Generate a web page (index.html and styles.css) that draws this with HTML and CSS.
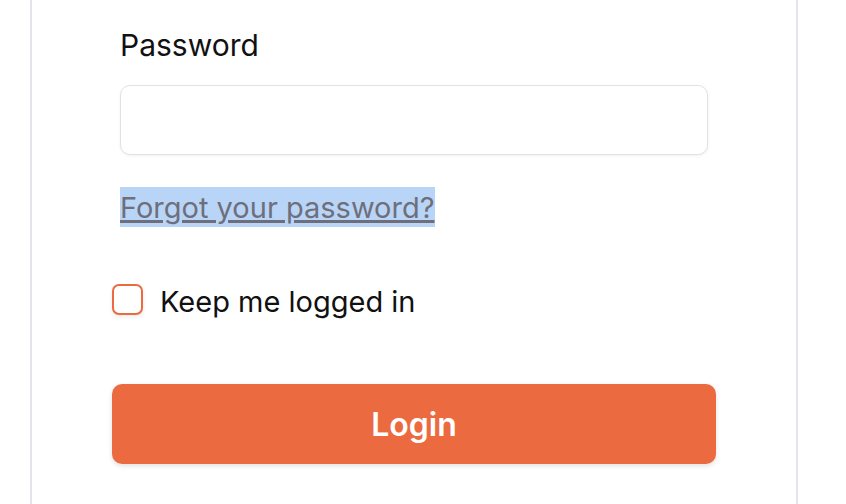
FILE: index.html
```html
<!DOCTYPE html>
<html>
<head>
<meta charset="utf-8">
<link rel="stylesheet" href="styles.css">
</head>
<body>
<div class="card">
  <form class="form">
    <div class="field">
      <label class="label" for="pw">Password</label>
      <input class="input" id="pw" type="password">
    </div>
    <div class="forgot-row"><a class="forgot" href="#">Forgot your password?</a></div>
    <label class="remember">
      <span class="checkbox"></span>
      <span class="remember-text">Keep me logged in</span>
    </label>
    <button class="login" type="button">Login</button>
  </form>
</div>
</body>
</html>
```
FILE: styles.css
```css
html, body {
  margin: 0;
  padding: 0;
  background: #ffffff;
  height: 100%;
  overflow: hidden;
}
body {
  font-family: Inter, "Liberation Sans", sans-serif;
  color: #111111;
}
.card {
  margin-left: 30px;
  width: 764px;
  height: 100%;
  border-left: 2px solid #e4e4ec;
  border-right: 2px solid #e4e4ec;
  box-sizing: content-box;
}
.form {
  display: flex;
  flex-direction: column;
  padding: 25px 80px 0;
}
.field {
  display: flex;
  flex-direction: column;
  margin: 0 8px;
}
.label {
  font-size: 30px;
  line-height: 40px;
  font-weight: 400;
  color: #111;
}
.input {
  margin-top: 20px;
  height: 70px;
  box-sizing: border-box;
  border: 1.5px solid #e2e2e2;
  border-radius: 10px;
  box-shadow: 0 1px 3px rgba(0,0,0,0.06);
  background: #fff;
  outline: none;
}
.forgot-row {
  margin: 32px 8px 0;
  height: 40px;
  display: flex;
}
.forgot {
  display: inline-block;
  box-sizing: border-box;
  height: 40px;
  padding-top: 2px;
  line-height: 38px;
  font-size: 29px;
  color: #6f6f7b;
  background: #b8d5f8;
  text-decoration: underline;
  text-decoration-thickness: 3px;
  text-underline-offset: 2px;
}
.remember {
  display: flex;
  align-items: center;
  margin-top: 57px;
  height: 31px;
}
.checkbox {
  width: 31px;
  height: 31px;
  flex-shrink: 0;
  box-sizing: border-box;
  border: 2px solid #ec6a40;
  border-radius: 7px;
  background: #fff;
  box-shadow: 0 2px 4px rgba(0,0,0,0.08);
}
.remember-text {
  margin-left: 17px;
  padding-top: 4px;
  font-size: 29px;
  color: #111;
}
.login {
  margin-top: 69px;
  height: 80px;
  border: none;
  border-radius: 10px;
  background: #ec6a40;
  color: #fff;
  font-family: Inter, "Liberation Sans", sans-serif;
  font-size: 32px;
  font-weight: 600;
  box-shadow: 0 2px 5px rgba(0,0,0,0.12);
}
```
